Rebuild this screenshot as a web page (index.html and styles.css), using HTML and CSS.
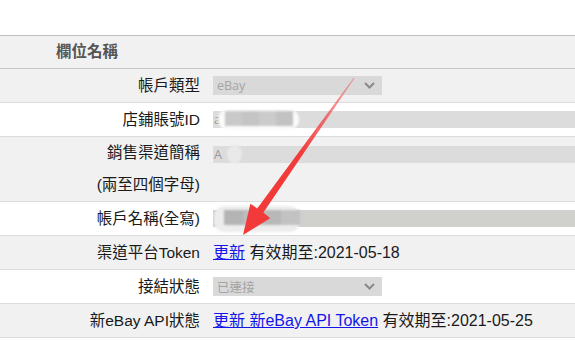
FILE: index.html
```html
<!DOCTYPE html>
<html lang="zh-Hant">
<head>
<meta charset="utf-8">
<title>欄位名稱</title>
<link rel="stylesheet" href="styles.css">
</head>
<body>
<div class="page">
  <div class="spacer"></div>
  <div class="table">
    <div class="head">欄位名稱</div>

    <div class="row alt">
      <div class="label">帳戶類型</div>
      <div class="value">
        <div class="select"><span>eBay</span><svg class="chev" width="11" height="7" viewBox="0 0 11 7"><polyline points="1,1 5.5,5.5 10,1" fill="none" stroke="#8a8a8a" stroke-width="2"/></svg></div>
      </div>
    </div>

    <div class="row">
      <div class="label">店鋪賬號ID</div>
      <div class="value">
        <div class="input"><span class="ch">a</span><span class="blur b-wide"><i></i><i></i><i></i><i></i></span></div>
      </div>
    </div>

    <div class="row alt tall">
      <div class="label two">銷售渠道簡稱<br>(兩至四個字母)</div>
      <div class="value top">
        <div class="input"><span class="ch">A</span><span class="dot"></span></div>
      </div>
    </div>

    <div class="row">
      <div class="label">帳戶名稱(全寫)</div>
      <div class="value">
        <div class="input warm"><span class="blur b-dark"><i></i><i></i><i></i><i></i></span></div>
      </div>
    </div>

    <div class="row alt">
      <div class="label">渠道平台Token</div>
      <div class="text"><a href="#">更新</a> 有效期至:2021-05-18</div>
    </div>

    <div class="row">
      <div class="label">接結狀態</div>
      <div class="value">
        <div class="select"><span>已連接</span><svg class="chev" width="11" height="7" viewBox="0 0 11 7"><polyline points="1,1 5.5,5.5 10,1" fill="none" stroke="#8a8a8a" stroke-width="2"/></svg></div>
      </div>
    </div>

    <div class="row alt">
      <div class="label">新eBay API狀態</div>
      <div class="text"><a href="#">更新 新eBay API Token</a> 有效期至:2021-05-25</div>
    </div>
  </div>

  <svg class="arrow" width="575" height="351" viewBox="0 0 575 351">
    <defs>
      <linearGradient id="fade" x1="354" y1="78" x2="300" y2="155" gradientUnits="userSpaceOnUse">
        <stop offset="0" stop-color="#f23a3a" stop-opacity="0.35"/>
        <stop offset="1" stop-color="#f23a3a" stop-opacity="1"/>
      </linearGradient>
    </defs>
    <polygon points="354.6,78.3 263.4,212.6 270.2,218.2 243,235 250.4,203.8 257.2,208.4 353.6,77.7" fill="url(#fade)"/>
  </svg>
</div>
</body>
</html>
```

FILE: styles.css
```css
html, body {
  margin: 0;
  padding: 0;
  background: #ffffff;
}

body {
  font-family: "Liberation Sans", "Noto Sans CJK TC", sans-serif;
  font-size: 15.5px;
  color: #1a1a1a;
  overflow: hidden;
}

.page {
  position: relative;
  width: 575px;
  height: 351px;
  overflow: hidden;
}

.spacer {
  height: 35px;
}

.table {
  display: flex;
  flex-direction: column;
}

.head {
  background: #f1f1f1;
  border-top: 1px solid #bdbdbd;
  border-bottom: 1px solid #c6c6c6;
  height: 32px;
  line-height: 32px;
  padding-left: 56px;
  font-weight: bold;
  color: #555555;
}

.row {
  display: grid;
  grid-template-columns: 200px 1fr;
  column-gap: 13px;
  border-bottom: 1px solid #dcdcdc;
  background: #ffffff;
  min-height: 33px;
}

.row.alt {
  background: #f1f1f1;
}

.label {
  text-align: right;
  line-height: 33px;
  white-space: nowrap;
}

.label.two {
  line-height: 32px;
}

.value {
  display: flex;
  align-items: center;
  min-width: 0;
  overflow: hidden;
}

.value.top {
  align-items: flex-start;
  padding-top: 9px;
}

.text {
  font-size: 16px;
  line-height: 33px;
  white-space: nowrap;
}

.text a {
  color: #1515e8;
  text-decoration: underline;
}

.select {
  width: 169px;
  height: 19px;
  background: #d9d9d9;
  display: flex;
  align-items: center;
  justify-content: space-between;
  padding: 0 7px 0 4px;
  box-sizing: border-box;
  font-family: "Open Sans", "Noto Sans CJK TC", sans-serif;
  font-size: 12.5px;
  color: #a3a3a3;
}

.chev {
  display: block;
}

.input {
  flex: 1;
  height: 17px;
  background: #dcdcdc;
  display: flex;
  align-items: center;
  position: relative;
  font-family: "Open Sans", sans-serif;
  font-size: 12.5px;
  color: #9a9a9a;
  padding-left: 1px;
}

.input.warm {
  background: #d0d0cc;
}

.ch {
  width: 4px;
  overflow: visible;
}

.blur {
  display: flex;
  height: 21px;
  border-radius: 10px;
  background: #fbfbfb;
  padding: 2px 5px 4px 7px;
  box-sizing: border-box;
  filter: blur(1.2px);
}

.blur i {
  display: block;
  width: 17px;
  height: 15px;
  background: #c9c9c9;
}

.blur i:nth-child(2) { background: #c4c4c4; }
.blur i:nth-child(3) { background: #cbcbcb; }
.blur i:nth-child(4) { background: #c2c2c2; }

.b-wide {
  width: 81px;
}

.b-dark {
  width: 86px;
  background: #ededed;
  height: 26px;
  padding: 4px 0 5px 10px;
}

.b-dark i {
  background: #b4b4b4;
  width: 19px;
}

.b-dark i:nth-child(2) { background: #bcbcbc; }
.b-dark i:nth-child(3) { background: #b8b8b8; }
.b-dark i:nth-child(4) { background: #c2c2c2; }

.dot {
  display: block;
  width: 15px;
  height: 19px;
  border-radius: 50%;
  background: #e9e9e9;
  margin-left: 9px;
  filter: blur(1px);
}

.arrow {
  position: absolute;
  left: 0;
  top: 0;
  pointer-events: none;
}
```
